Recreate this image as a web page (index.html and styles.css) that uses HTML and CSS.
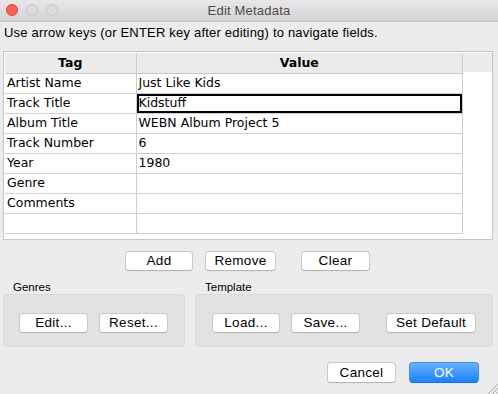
FILE: index.html
```html
<!DOCTYPE html>
<html>
<head>
<meta charset="utf-8">
<title>Edit Metadata</title>
<link rel="stylesheet" href="styles.css">
</head>
<body>
<div class="window">
  <div class="titlebar">
    <div class="lights">
      <span class="light red"></span>
      <span class="light grey"></span>
      <span class="light grey"></span>
    </div>
    <div class="title">Edit Metadata</div>
  </div>
  <div class="hint">Use arrow keys (or ENTER key after editing) to navigate fields.</div>
  <div class="table-frame">
    <table class="meta">
      <thead>
        <tr><th class="c-tag">Tag</th><th class="c-val">Value</th></tr>
      </thead>
      <tbody>
        <tr><td>Artist Name</td><td>Just Like Kids</td></tr>
        <tr><td>Track Title</td><td class="editing">Kidstuff</td></tr>
        <tr><td>Album Title</td><td>WEBN Album Project 5</td></tr>
        <tr><td>Track Number</td><td>6</td></tr>
        <tr><td>Year</td><td>1980</td></tr>
        <tr><td>Genre</td><td></td></tr>
        <tr><td>Comments</td><td></td></tr>
        <tr><td></td><td></td></tr>
      </tbody>
    </table>
    <div class="filler"><div class="filler-head"></div></div>
  </div>
  <div class="actions">
    <button class="btn w68">Add</button>
    <button class="btn w71 gap12">Remove</button>
    <button class="btn w69 gap25">Clear</button>
  </div>
  <div class="groups">
    <div class="group genres">
      <div class="group-label">Genres</div>
      <div class="group-box">
        <button class="btn w69">Edit...</button>
        <button class="btn w69 gap11">Reset...</button>
      </div>
    </div>
    <div class="group template">
      <div class="group-label">Template</div>
      <div class="group-box">
        <button class="btn w68">Load...</button>
        <button class="btn w69 gap11">Save...</button>
        <button class="btn w90 gap26">Set Default</button>
      </div>
    </div>
  </div>
  <div class="footer">
    <button class="btn w69">Cancel</button>
    <button class="btn primary w70 gap13">OK</button>
  </div>
  <svg class="grip" width="12" height="12" viewBox="0 0 12 12">
    <line x1="12" y1="2" x2="2" y2="12" stroke="#a8a8a8" stroke-width="1"/>
    <line x1="12" y1="6" x2="6" y2="12" stroke="#a8a8a8" stroke-width="1"/>
    <line x1="12" y1="10" x2="10" y2="12" stroke="#a8a8a8" stroke-width="1"/>
  </svg>
</div>
</body>
</html>
```
FILE: styles.css
```css
* { box-sizing: border-box; }
html, body { margin: 0; padding: 0; }
body {
  background: #ececec;
  font-family: "Liberation Sans", Arial, sans-serif;
  font-size: 13px;
  color: #000;
}
.window {
  position: relative;
  width: 498px;
  height: 394px;
  display: flex;
  flex-direction: column;
  background: #ececec;
  overflow: hidden;
}
.titlebar {
  position: relative;
  height: 22px;
  flex: none;
  background: linear-gradient(#e9e7e9, #d4d2d4);
  border-bottom: 1px solid #c6c4c6;
  display: flex;
  align-items: center;
}
.lights {
  display: flex;
  gap: 8px;
  padding-left: 6px;
  margin-top: -2px;
}
.light {
  width: 12px;
  height: 12px;
  border-radius: 50%;
  display: block;
}
.light.red { background: #fc5f57; border: 1px solid #e0443e; }
.light.grey { background: #dddbdd; border: 1px solid #cac8ca; }
.title {
  position: absolute;
  left: 0; right: 0; top: 0;
  line-height: 21px;
  text-align: center;
  color: #4d4d4d;
  font-size: 13px;
  letter-spacing: 0.2px;
}
.hint {
  margin: 3px 0 0 4px;
  line-height: 16px;
  font-size: 13px;
  letter-spacing: 0.2px;
}
.table-frame {
  margin: 10px 5px 0 3px;
  height: 189px;
  border: 1px solid #c6c6c6;
  padding: 1px 0 0 1px;
  background: #fff;
  display: flex;
  flex: none;
}
.meta {
  width: 458px;
  border-collapse: collapse;
  table-layout: fixed;
  font-family: "DejaVu Sans", sans-serif;
  font-size: 12.5px;
  align-self: flex-start;
}
.meta th, .meta td {
  height: 20px;
  padding: 0 0 0 2px;
  border-right: 1px solid #cfcfcf;
  border-bottom: 1px solid #cfcfcf;
  white-space: nowrap;
  overflow: hidden;
  line-height: 18px;
  text-align: left;
}
.meta th {
  background: #ebebeb;
  text-align: center;
  font-weight: bold;
  padding: 0;
  height: 20px;
  border-bottom-color: #c8c8c8;
}
.meta .c-tag { width: 131px; }
.meta td.editing { box-shadow: inset 0 0 0 2px #000; }
.filler { flex: 1; }
.filler-head { height: 19px; background: #ececec; }
.actions {
  display: flex;
  padding-left: 125px;
  margin-top: 11px;
  flex: none;
}
.btn {
  height: 20px;
  padding: 0;
  border: 1px solid #c9c9c9;
  border-bottom-color: #b5b5b5;
  border-radius: 4px;
  background: #fff;
  font-family: "Liberation Sans", Arial, sans-serif;
  font-size: 13.5px;
  letter-spacing: 0.3px;
  color: #000;
  line-height: 18px;
  text-align: center;
  white-space: nowrap;
  box-shadow: 0 0.5px 0 rgba(0,0,0,0.05);
}
.w68 { width: 68px; }
.w69 { width: 69px; }
.w70 { width: 70px; }
.w71 { width: 71px; }
.w90 { width: 90px; }
.gap11 { margin-left: 11px; }
.gap12 { margin-left: 12px; }
.gap13 { margin-left: 13px; }
.gap25 { margin-left: 25px; }
.gap26 { margin-left: 26px; }
.groups {
  display: flex;
  gap: 10px;
  margin: 10px 5px 0 3px;
  flex: none;
}
.group.genres { width: 182px; }
.group.template { flex: 1; }
.group-label {
  font-size: 11.5px;
  line-height: 13px;
  padding-left: 10px;
}
.group-box {
  height: 53px;
  background: #e2e2e2;
  border: 1px solid #dadada;
  border-radius: 4px;
  display: flex;
  align-items: flex-start;
  padding-top: 18px;
}
.genres .group-box { padding-left: 15px; }
.template .group-box { padding-left: 16px; }
.footer {
  display: flex;
  justify-content: flex-end;
  padding-right: 19px;
  margin-top: 15px;
  flex: none;
}
.footer .btn { height: 21px; }
.btn.primary {
  background: linear-gradient(#69b1fa, #1b83fb);
  border-color: #3d8ff6;
  border-bottom-color: #1a6fe0;
  color: #fff;
}
.grip {
  position: absolute;
  right: 0;
  bottom: 0;
}
```
